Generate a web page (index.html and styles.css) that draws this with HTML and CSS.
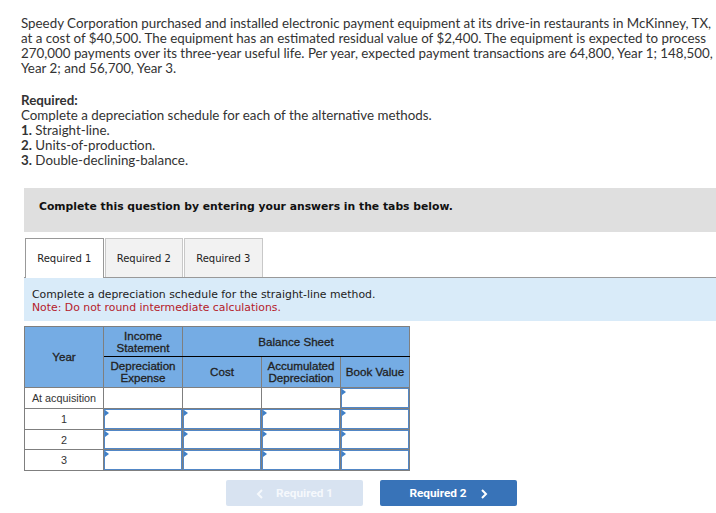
FILE: index.html
```html
<!DOCTYPE html>
<html lang="en">
<head>
<meta charset="utf-8">
<title>Depreciation schedule</title>
<link rel="stylesheet" href="styles.css">
</head>
<body>
<main class="page">
  <section class="question">
    <p class="intro">Speedy Corporation purchased and installed electronic payment equipment at its drive-in restaurants in McKinney, TX, at a cost of $40,500. The equipment has an estimated residual value of $2,400. The equipment is expected to process 270,000 payments over its three-year useful life. Per year, expected payment transactions are 64,800, Year 1; 148,500, Year 2; and 56,700, Year 3.</p>
    <p class="req-title">Required:</p>
    <p class="req-line">Complete a depreciation schedule for each of the alternative methods.</p>
    <ol class="methods">
      <li><b>1.</b> Straight-line.</li>
      <li><b>2.</b> Units-of-production.</li>
      <li><b>3.</b> Double-declining-balance.</li>
    </ol>
  </section>
  <div class="banner">Complete this question by entering your answers in the tabs below.</div>
  <div class="tabs">
    <div class="tab active">Required 1</div>
    <div class="tab">Required 2</div>
    <div class="tab">Required 3</div>
  </div>
  <div class="panel">
    <div>Complete a depreciation schedule for the straight-line method.</div>
    <div class="note">Note: Do not round intermediate calculations.</div>
  </div>
  <table class="schedule">
    <colgroup><col class="c1"><col class="c2"><col class="c2"><col class="c2"><col class="c3"></colgroup>
    <thead>
      <tr class="h1">
        <th rowspan="2">Year</th>
        <th class="under">Income<br>Statement</th>
        <th colspan="3" class="under">Balance Sheet</th>
      </tr>
      <tr class="h2">
        <th>Depreciation<br>Expense</th>
        <th>Cost</th>
        <th>Accumulated<br>Depreciation</th>
        <th>Book Value</th>
      </tr>
    </thead>
    <tbody>
      <tr><td class="yr">At acquisition</td><td></td><td></td><td></td><td class="in"></td></tr>
      <tr><td class="yr">1</td><td class="in"></td><td class="in"></td><td class="in"></td><td class="in"></td></tr>
      <tr class="short"><td class="yr">2</td><td class="in"></td><td class="in"></td><td class="in"></td><td class="in"></td></tr>
      <tr><td class="yr">3</td><td class="in"></td><td class="in"></td><td class="in"></td><td class="in"></td></tr>
    </tbody>
  </table>
  <nav class="nav">
    <div class="btn off"><svg class="chev" viewBox="0 0 8 10" width="8" height="10"><path d="M6 1 2 5l4 4" fill="none" stroke="currentColor" stroke-width="2"/></svg><span>Required 1</span></div>
    <div class="btn"><span>Required 2</span><svg class="chev" viewBox="0 0 8 10" width="8" height="10"><path d="M2 1l4 4-4 4" fill="none" stroke="currentColor" stroke-width="2"/></svg></div>
  </nav>
</main>
</body>
</html>
```
FILE: styles.css
```css
* { box-sizing: border-box; }
html, body { margin: 0; padding: 0; background: #fff; }
.page { width: 716px; height: 513px; overflow: hidden; }
.question {
  padding: 16px 0 0 21px;
  font: 13.35px/15px Lato, "Liberation Sans", sans-serif;
  color: #333;
  height: 188px;
}
.intro { margin: 0; width: 695px; }
.req-title { margin: 17px 0 0; font-weight: 700; }
.req-line { margin: 0; }
.methods { list-style: none; margin: 0; padding: 0; }
.methods b { font-weight: 700; }
.banner {
  margin-left: 24px;
  height: 44px;
  padding: 11px 0 0 15px;
  background: #dfdfdf;
  color: #111;
  font: 700 10.8px/15px "DejaVu Sans", Verdana, sans-serif;
}
.tabs {
  display: flex;
  gap: 1px;
  margin: 6px 0 0 24px;
  height: 40px;
  border-bottom: 1px solid #999;
  padding-left: 1px;
}
.tab {
  width: 78.5px;
  height: 39px;
  border: 1px solid #c8c8c8;
  border-bottom: 0;
  background: #f2f2f2;
  color: #222;
  font: 10px/40px "DejaVu Sans", Verdana, sans-serif;
  text-align: center;
}
.tab.active {
  height: 40px;
  background: #fff;
  border-color: #999;
}
.panel {
  margin-left: 24px;
  height: 43px;
  padding: 10px 0 0 8px;
  background: #d9ebf9;
  color: #222;
  font: 10.87px/13px "DejaVu Sans", Verdana, sans-serif;
}
.note { color: #b5202a; }
.schedule {
  margin: 5px 0 0 24px;
  width: 385px;
  border-collapse: collapse;
  table-layout: fixed;
  font: 11.6px/12px "Liberation Sans", Arial, sans-serif;
  color: #222;
}
.c1, .c2 { width: 79px; }
.c3 { width: 69px; }
.schedule th, .schedule td { border: 1px solid #7f7f7f; padding: 0; text-align: center; }
.schedule th { background: #75ace4; font-weight: 400; -webkit-text-stroke: 0.3px #222; }
.h1 { height: 30px; }
.h2 { height: 31px; }
.schedule th.under { border-bottom: 1px solid #000; }
.schedule tbody tr { height: 21px; }
.schedule tbody tr.short { height: 20px; }
.schedule td.yr { color: #333; font-size: 10.8px; }
.schedule td.in {
  position: relative;
  background: #fff;
  box-shadow: inset 0 0 0 1px #5287c6;
}
.schedule td.in::before {
  content: "";
  position: absolute;
  left: 1px;
  top: 1px;
  border-left: 4px solid #3f80c8;
  border-top: 3px solid transparent;
  border-bottom: 3px solid transparent;
}
.nav { display: flex; gap: 17px; margin: 9px 0 0 226px; }
.btn {
  width: 137px;
  height: 26px;
  display: flex;
  align-items: center;
  justify-content: center;
  gap: 13px;
  padding-top: 1px;
  border-radius: 2px;
  background: #3873b8;
  color: #fff;
  font: 700 11.8px/25px Roboto, "Liberation Sans", sans-serif;
}
.btn.off { background: #d8e3f1; gap: 12px; color: #f5f8fc; }
.chev { flex: none; }
```
